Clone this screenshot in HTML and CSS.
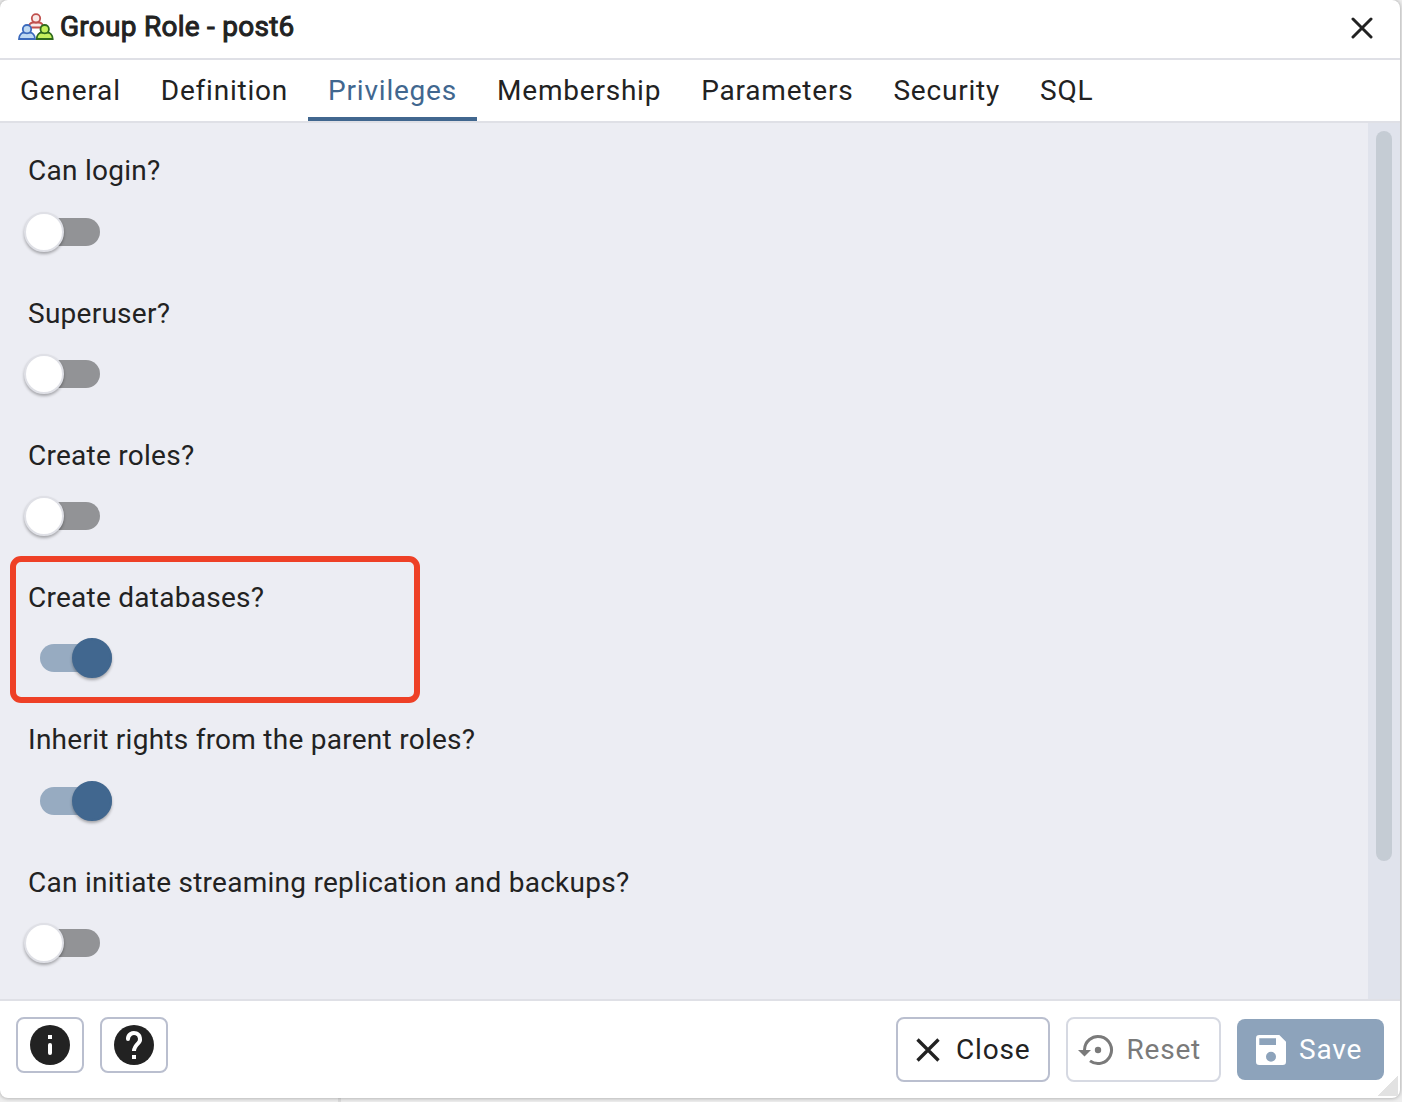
FILE: index.html
```html
<!DOCTYPE html>
<html lang="en">
<head>
  <meta charset="UTF-8" />
  <meta name="viewport" content="width=device-width, initial-scale=1.0"/>
  <title>Group Role - post6</title>
  <link rel="stylesheet" href="styles.css">
</head>
<body>
  <div class="dialog">
    <header class="dialog-header">
      <svg class="role-icon" viewBox="0 0 36 28">
        <g fill="#f9e9e7" stroke="#c0504d" stroke-width="1.8">
          <path d="M10.500 14.500c.5-3.500 2.500-5 5-5h5c2.500 0 4.500 1.500 5 5z"/>
          <circle cx="18" cy="5.300" r="4.200"/>
        </g>
        <g fill="#c0daf2" stroke="#3c6bbd" stroke-width="1.800">
          <path d="M1 26c0-4 2.500-6.500 5.500-6.500h5c3 0 5.500 2.500 5.500 6.500z"/>
          <circle cx="9" cy="16.200" r="4.200"/>
        </g>
        <g fill="#c6f25e" stroke="#2f6b1e" stroke-width="1.800">
          <path d="M18.700 26c0-4 2.500-6.500 5.500-6.500h5c3 0 5.500 2.500 5.500 6.500z"/>
          <circle cx="26.700" cy="16.200" r="4.200"/>
        </g>
      </svg>
      <h1>Group Role - post6</h1>
      <button class="header-close" aria-label="Close">
        <svg width="22" height="22" viewBox="0 0 22 22"><path d="M2 2l18 18M20 2L2 20" fill="none" stroke="#222" stroke-width="3" stroke-linecap="round"/></svg>
      </button>
    </header>

    <nav class="tabs">
      <button class="tab">General</button>
      <button class="tab">Definition</button>
      <button class="tab active">Privileges</button>
      <button class="tab">Membership</button>
      <button class="tab">Parameters</button>
      <button class="tab">Security</button>
      <button class="tab">SQL</button>
    </nav>

    <main class="content">
      <div class="fields">
        <div class="field">
          <label>Can login?</label>
          <span class="switch"></span>
        </div>
        <div class="field">
          <label>Superuser?</label>
          <span class="switch"></span>
        </div>
        <div class="field">
          <label>Create roles?</label>
          <span class="switch"></span>
        </div>
        <div class="field highlight">
          <label>Create databases?</label>
          <span class="switch on"></span>
        </div>
        <div class="field">
          <label>Inherit rights from the parent roles?</label>
          <span class="switch on"></span>
        </div>
        <div class="field">
          <label>Can initiate streaming replication and backups?</label>
          <span class="switch"></span>
        </div>
      </div>
      <div class="scrollbar"><div class="scroll-thumb"></div></div>
    </main>

    <footer class="dialog-footer">
      <button class="icon-btn" aria-label="Info">
        <svg width="40" height="40" viewBox="0 0 40 40">
          <circle cx="20" cy="20" r="20" fill="#222"/>
          <path d="M18 10h4v4h-4z" fill="#fff"/>
          <path d="M20 20v8" stroke="#fff" stroke-width="4" stroke-linecap="round"/>
        </svg>
      </button>
      <button class="icon-btn" aria-label="Help">
        <svg width="40" height="40" viewBox="0 0 40 40">
          <circle cx="20" cy="20" r="20" fill="#222"/>
          <path d="M14 14a6 6 0 1 1 10.300 4.200C21.500 21 20 22.500 20 26" fill="none" stroke="#fff" stroke-width="4"/>
          <circle cx="14" cy="14" r="2" fill="#fff"/>
          <path d="M18 30h4v4h-4z" fill="#fff"/>
        </svg>
      </button>
      <div class="actions">
        <button class="btn">
          <svg width="24" height="24" viewBox="0 0 24 24"><path d="M1.500 1.500l21 21M22.500 1.500l-21 21" fill="none" stroke="#222" stroke-width="3.300"/></svg>
          <span>Close</span>
        </button>
        <button class="btn reset">
          <svg width="36" height="32" viewBox="0 0 36 32">
            <path d="M6.500 16a13.500 13.500 0 1 1 5.500 10.900" fill="none" stroke="#7a7a7a" stroke-width="3"/>
            <path d="M0 16h13l-6.500 6.500z" fill="#7a7a7a"/>
            <circle cx="20" cy="16" r="3.200" fill="#7a7a7a"/>
          </svg>
          <span>Reset</span>
        </button>
        <button class="btn save">
          <svg width="30" height="30" viewBox="0 0 30 30">
            <path fill="#fff" fill-rule="evenodd" d="M3.300 0H23.300L30 6.700V26.700A3.300 3.300 0 0 1 26.700 30H3.300A3.300 3.300 0 0 1 0 26.700V3.300A3.300 3.300 0 0 1 3.300 0zM3.300 3.300V10H20V3.300zM15 16.700a5 5 0 1 0 0 10a5 5 0 0 0 0-10z"/>
          </svg>
          <span>Save</span>
        </button>
      </div>
      <span class="resize-handle"></span>
    </footer>
  </div>
</body>
</html>
```
FILE: styles.css
```css
*, *::before, *::after {
  box-sizing: border-box;
}
body {
  margin: 0;
  height: 1102px;
  overflow: hidden;
  background: linear-gradient(90deg, #eeeeee 338px, #dddddd 338px, #dddddd 341px, #eeeeee 341px);
  font-family: Roboto, sans-serif;
  font-size: 28px;
  color: #222;
}
button {
  font: inherit;
  color: inherit;
  background: none;
  border: none;
  padding: 0;
}
svg {
  display: block;
  flex: none;
}
.dialog {
  width: 1400px;
  height: 1098px;
  display: flex;
  flex-direction: column;
  background: #fff;
  border-radius: 8px;
  box-shadow: 0 0 4px rgba(0,0,0,0.35);
  overflow: hidden;
}
.dialog-header {
  height: 60px;
  flex: none;
  display: flex;
  align-items: center;
  padding: 0 27px 4px 18px;
  border-bottom: 2px solid #dfe0e6;
}
.role-icon {
  width: 36px;
  height: 28px;
}
.dialog-header h1 {
  margin: 0 0 2px 6px;
  font-size: 28px;
  font-weight: 400;
  letter-spacing: 0.26px;
  -webkit-text-stroke: 1px #222;
}
.header-close {
  margin: 2px 0 0 auto;
}
.tabs {
  height: 63px;
  flex: none;
  display: flex;
  border-bottom: 2px solid #dfe0e6;
}
.tab {
  padding: 0 20px;
  letter-spacing: 0.79px;
  border-top: 4px solid transparent;
  border-bottom: 4px solid transparent;
}
.tab.active {
  color: #41678f;
  border-bottom-color: #41678f;
}
.content {
  flex: 1;
  min-height: 0;
  display: flex;
  background: #ecedf3;
}
.fields {
  flex: 1;
  padding-top: 32.45px;
}
.field {
  position: relative;
  height: 142.25px;
  padding-left: 28px;
  display: flex;
  flex-direction: column;
  align-items: flex-start;
  gap: 30.2px;
}
.field label {
  line-height: 32px;
  letter-spacing: 0.26px;
}
.highlight::before {
  content: "";
  position: absolute;
  left: 10px;
  top: -26px;
  width: 410px;
  height: 147px;
  border: 6px solid #ee4026;
  border-radius: 11px;
}
.switch {
  position: relative;
  width: 72px;
  height: 28px;
  border-radius: 14px;
  background: #929396;
}
.switch::after {
  content: "";
  position: absolute;
  left: -4px;
  top: -6px;
  width: 40px;
  height: 40px;
  border-radius: 50%;
  background: #fff;
  border: 2px solid #dfe0e6;
  box-shadow: 0 2px 3px rgba(0,0,0,0.3);
}
.switch.on {
  margin-left: 12px;
  background: #97abc1;
}
.switch.on::after {
  left: 32px;
  background: #41678f;
  border-color: #41678f;
}
.scrollbar {
  width: 32px;
  padding: 8px;
  background: #e0e3ec;
}
.scroll-thumb {
  height: 730px;
  border-radius: 8px;
  background: #c5ccd4;
}
.dialog-footer {
  position: relative;
  height: 99px;
  flex: none;
  display: flex;
  align-items: flex-start;
  gap: 16px;
  padding: 16px 16px 0;
  border-top: 2px solid #dfe0e6;
}
.icon-btn {
  width: 68px;
  height: 56px;
  display: flex;
  align-items: center;
  justify-content: center;
  border: 2px solid #babfcf;
  border-radius: 8px;
}
.actions {
  margin-left: auto;
  display: flex;
  align-items: center;
  gap: 16px;
}
.btn {
  width: 154px;
  height: 65px;
  display: flex;
  align-items: center;
  gap: 16px;
  padding-left: 18px;
  letter-spacing: 0.8px;
  border: 2px solid #babfcf;
  border-radius: 8px;
}
.btn.reset {
  width: 155px;
  gap: 12.5px;
  padding-left: 10px;
  color: #7a7a7a;
  border-color: #d6d9e2;
}
.btn.save {
  width: 147px;
  height: 61px;
  gap: 13px;
  padding-left: 19px;
  color: #fff;
  background: #8da3bb;
  border: none;
}
.resize-handle {
  position: absolute;
  right: 2px;
  bottom: 2px;
  width: 20px;
  height: 20px;
  background: linear-gradient(135deg, transparent 50%, #e2e2e2 50%);
}
```
